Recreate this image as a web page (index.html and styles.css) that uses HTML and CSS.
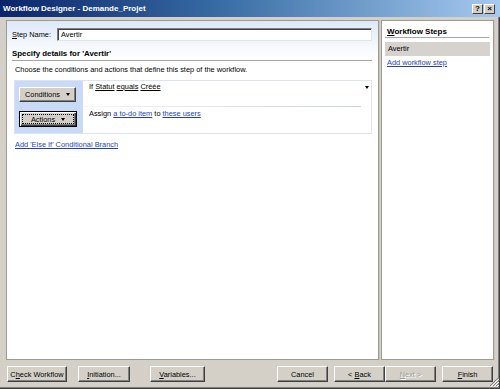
FILE: index.html
```html
<!DOCTYPE html>
<html>
<head>
<meta charset="utf-8">
<link rel="stylesheet" href="styles.css">
</head>
<body>
<div class="window">
  <div class="titlebar">
    <span class="title">Workflow Designer - Demande_Projet</span>
    <div class="tb-btns"><span class="tb-btn">?</span><span class="tb-btn">×</span></div>
  </div>
  <div class="main">
    <div class="panel left">
      <div class="step-head">
        <div class="step-row"><span class="label"><u>S</u>tep Name:</span><div class="input">Avertir</div></div>
        <div class="section-title">Specify details for 'Avertir'</div>
      </div>
      <div class="hint">Choose the conditions and actions that define this step of the workflow.</div>
      <div class="rule-box">
        <div class="rb-side">
          <div class="btn cond-btn"><span>Conditions</span><span class="tri"></span></div>
          <div class="btn act-btn"><span>Actions</span><span class="tri"></span></div>
        </div>
        <div class="rb-body">
          <div class="rb-row row-cond"><span>If <u>Statut</u> <u>equals</u> <u>Créée</u></span><span class="tri menu-tri"></span></div>
          <div class="rb-row row-act">Assign <a class="lnk">a to-do item</a> to <a class="lnk">these users</a></div>
        </div>
      </div>
      <a class="lnk else-link">Add 'Else If' Conditional Branch</a>
    </div>
    <div class="panel right">
      <div class="steps-title"><u>W</u>orkflow Steps</div>
      <div class="step-item">Avertir</div>
      <a class="lnk add-step">Add workflow step</a>
    </div>
  </div>
  <div class="footer">
    <div class="btn fbtn w-check"><span>C<u>h</u>eck Workflow</span></div>
    <div class="btn fbtn w-init"><span><u>I</u>nitiation...</span></div>
    <div class="btn fbtn w-var"><span><u>V</u>ariables...</span></div>
    <div class="spacer"></div>
    <div class="btn fbtn w-std"><span>Cancel</span></div>
    <div class="btn fbtn w-std back"><span>&lt; <u>B</u>ack</span></div>
    <div class="btn fbtn w-std disabled"><span><u>N</u>ext &gt;</span></div>
    <div class="btn fbtn w-std finish"><span><u>F</u>inish</span></div>
  </div>
  <svg class="grip" width="10" height="10" viewBox="0 0 10 10">
    <path d="M9 1L1 9M9 4L4 9M9 7L7 9" stroke="#808080" stroke-width="1"/>
    <path d="M10 2L2 10M10 5L5 10M10 8L8 10" stroke="#ffffff" stroke-width="1"/>
  </svg>
</div>
</body>
</html>
```
FILE: styles.css
```css
html, body { margin: 0; padding: 0; }
body { width: 500px; height: 389px; overflow: hidden; background: #d4d0c8; }
.window {
  position: relative;
  width: 500px; height: 389px;
  box-sizing: border-box;
  display: flex; flex-direction: column;
  background: #d4d0c8;
  font-family: "Liberation Sans", Arial, sans-serif;
  font-size: 7.4px;
  color: #000;
  box-shadow: inset -1px -1px #404040, inset -2px -2px #808080;
}
u { text-decoration: underline; text-underline-offset: 1px; }
.titlebar {
  height: 17px; flex: none;
  display: flex; align-items: center; justify-content: space-between;
  background: linear-gradient(to right, #0a246a 0%, #3a6ea5 45%, #a6caf0 100%);
}
.title { color: #fff; font-weight: bold; font-size: 8px; padding-left: 3px; }
.tb-btns { display: flex; gap: 1px; margin-right: 5px; margin-top: 1px; }
.tb-btn {
  width: 11px; height: 10px; box-sizing: border-box;
  background: #d4d0c8;
  border: 1px solid; border-color: #fff #404040 #404040 #fff;
  font-size: 8px; font-weight: bold; line-height: 8px; text-align: center;
}
.main {
  flex: none; height: 343px; box-sizing: border-box;
  padding: 3px 6px 0 6px;
  display: flex; gap: 2px;
}
.panel {
  background: #fff; box-sizing: border-box;
  border: 1px solid #9d9a92;
  box-shadow: 1px 0 0 #c8c4bc;
  display: flex; flex-direction: column;
}
.left { width: 373px; }
.right { width: 113px; }
.step-head {
  background: linear-gradient(to bottom, #dde8f8 0%, #f4f8fd 60%, #ffffff 100%);
}
.step-row { display: flex; align-items: center; height: 13px; margin-top: 7px; padding-left: 5px; }
.label { width: 45px; }
.input {
  width: 315px; height: 13px; box-sizing: border-box;
  background: #fff;
  border: 1px solid; border-color: #7f7f7f #e4e4e4 #e4e4e4 #7f7f7f;
  box-shadow: inset 1px 1px #404040;
  padding-left: 3px; line-height: 11px;
}
.section-title {
  font-weight: bold; font-size: 7.9px;
  line-height: 10px; padding-top: 8px; padding-bottom: 1px;
  margin: 0 6px 0 5px;
  border-bottom: 1px solid #a7a7a7;
}
.hint { line-height: 10px; padding: 4px 0 0 8px; margin-bottom: 5px; }
.rule-box {
  margin-left: 7px; width: 358px; height: 54px; box-sizing: border-box;
  border: 1px solid #dde3f0;
  display: flex;
}
.rb-side {
  width: 68px; flex: none; background: #c9daf7;
  padding: 6px 0 0 4px; box-sizing: border-box;
  display: flex; flex-direction: column; gap: 9px;
}
.btn {
  box-sizing: border-box;
  background: #d4d0c8;
  border: 1px solid; border-color: #fff #404040 #404040 #fff;
  box-shadow: inset -1px -1px #808080;
  display: flex; align-items: center; justify-content: center;
  white-space: nowrap;
}
.tri {
  display: inline-block; width: 0; height: 0;
  border-left: 2.5px solid transparent; border-right: 2.5px solid transparent;
  border-top: 3px solid #000; margin-left: 6px;
}
.cond-btn { width: 57px; height: 15px; }
.act-btn {
  width: 58px; height: 16px;
  border: 1px solid #000;
  box-shadow: inset 1px 1px #fff, inset -1px -1px #404040, inset -2px -2px #808080;
  outline: 1px dotted #000; outline-offset: -4px;
}
.rb-body { flex: 1; display: flex; flex-direction: column; }
.rb-row { line-height: 10px; padding-left: 6px; }
.row-cond {
  height: 26px; box-sizing: border-box; padding-top: 1px;
  display: flex; margin-right: 10px;
  border-bottom: 1px solid #d2d8e8;
  border-image: linear-gradient(to right, #f4f6fb, #c9d1e4) 1;
  border-top: 0; border-left: 0; border-right: 0;
}
.menu-tri { margin-left: auto; margin-top: 4px; margin-right: -8px; }
.row-act { padding-top: 2px; }
.lnk { color: #1f3fbf; text-decoration: underline; text-underline-offset: 1px; }
.else-link { display: block; line-height: 10px; margin: 6px 0 0 8px; align-self: flex-start; }
.steps-title {
  font-weight: bold; font-size: 8px;
  line-height: 10px; padding: 6px 0 0 2px;
  margin: 0 4px 0 3px;
  border-bottom: 1px solid #a7a7a7;
}
.step-item {
  margin: 4px 3px 0 3px; height: 14px; line-height: 14px;
  padding-left: 3px; background: #d6d3ce;
}
.add-step { display: block; line-height: 10px; margin: 2px 0 0 5px; align-self: flex-start; }
.footer {
  flex: 1; display: flex; align-items: flex-start;
  padding: 6px 7px 0 7px;
}
.fbtn { height: 16px; }
.w-check { width: 60px; }
.w-init { width: 52px; margin-left: 11px; }
.w-var { width: 55px; margin-left: 20px; }
.spacer { flex: 1; }
.w-std { width: 51px; }
.back { margin-left: 6px; }
.finish { margin-left: 6px; }
.disabled { color: #a09d96; text-shadow: 1px 1px 0 #fff; }
.grip { position: absolute; right: 1px; bottom: 2px; }
```
